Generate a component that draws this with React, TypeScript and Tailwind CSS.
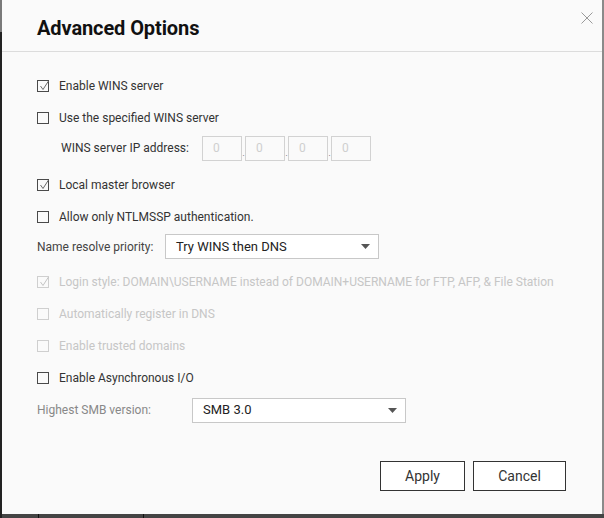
import React from "react";

function CheckBox({ checked, disabled }: { checked?: boolean; disabled?: boolean }) {
  return (
    <span
      className={`relative inline-block w-[12px] h-[12px] border shrink-0 ${
        disabled ? "border-[#cfcfcf]" : "border-[#4a4a4a]"
      }`}
    >
      {checked && (
        <svg
          className="absolute left-[1px] top-[-1px]"
          width="11"
          height="12"
          viewBox="0 0 11 12"
          fill="none"
        >
          <polyline
            points="1.5,6 4,9.5 9.5,1"
            stroke={disabled ? "#c4c4c4" : "#6a6a6a"}
            strokeWidth="1"
          />
        </svg>
      )}
    </span>
  );
}

function CheckRow({
  label,
  checked,
  disabled,
  className = "",
}: {
  label: string;
  checked?: boolean;
  disabled?: boolean;
  className?: string;
}) {
  return (
    <div className={`h-8 flex items-center gap-[10px] ${className}`}>
      <CheckBox checked={checked} disabled={disabled} />
      <span className={`whitespace-nowrap ${disabled ? "text-[#c6c6c6]" : "text-[#333]"}`}>{label}</span>
    </div>
  );
}

function Select({ value, className = "" }: { value: string; className?: string }) {
  return (
    <div
      className={`h-[25px] border border-[#c8c8c8] bg-white flex items-center justify-between pl-[10px] pr-[8px] ${className}`}
    >
      <span className="text-[13px] text-[#222]">{value}</span>
      <svg width="9" height="5" viewBox="0 0 9 5">
        <polygon points="0,0 9,0 4.5,5" fill="#555" />
      </svg>
    </div>
  );
}

function IpBox() {
  return (
    <div className="w-[40px] h-[25px] border border-[#d2d2d2] bg-[#fafafa] flex items-center pl-[10px] text-[#cfcfcf]">
      0
    </div>
  );
}

function IpDot() {
  return <span className="w-[3px] text-[8px] leading-[14px] text-[#555] text-center">.</span>;
}

export default function App() {
  return (
    <div
      className="w-[604px] h-[518px] flex flex-col bg-[#3b3b3b] overflow-hidden text-[12px]"
      style={{ fontFamily: "Roboto, 'Liberation Sans', sans-serif" }}
    >
      <div className="flex h-[514px]">
        {/* left backdrop strip */}
        <div className="w-[2px] flex flex-col">
          <div className="h-[32px] bg-[#7a7a7a]" />
          <div className="flex-1 bg-[#222]" />
        </div>

        {/* dialog */}
        <div className="w-[600px] bg-[#fafafa] flex flex-col relative">
          <div className="h-[52px] border-b border-[#dcdcdc] flex items-center pl-[35px] pt-[4px]">
            <h1 className="text-[20px] font-bold text-[#111] tracking-[-0.1px]">Advanced Options</h1>
          </div>
          <button className="absolute left-[579px] top-[12px] w-[12px] h-[12px]">
            <svg width="12" height="12" viewBox="0 0 12 12">
              <path d="M0.5 0.5 L11.5 11.5 M11.5 0.5 L0.5 11.5" stroke="#9a9a9a" strokeWidth="1" />
            </svg>
          </button>

          <div className="pl-[35px] pt-[18px] flex flex-col">
            <CheckRow label="Enable WINS server" checked />
            <CheckRow label="Use the specified WINS server" />
            <div className="h-[28px] flex items-center">
              <span className="w-[165px] shrink-0 pl-[24px] whitespace-nowrap text-[#333]">
                WINS server IP address:
              </span>
              <div className="flex items-end">
                <IpBox />
                <IpDot />
                <IpBox />
                <IpDot />
                <IpBox />
                <IpDot />
                <IpBox />
              </div>
            </div>
            <CheckRow label="Local master browser" checked className="mt-[7px]" />
            <CheckRow label="Allow only NTLMSSP authentication." />
            <div className="h-[27px] flex items-center">
              <span className="w-[128px] shrink-0 text-[#444]">Name resolve priority:</span>
              <Select value="Try WINS then DNS" className="w-[214px]" />
            </div>
            <CheckRow
              label="Login style: DOMAIN\USERNAME instead of DOMAIN+USERNAME for FTP, AFP, & File Station"
              checked
              disabled
              className="mt-[6px]"
            />
            <CheckRow label="Automatically register in DNS" disabled />
            <CheckRow label="Enable trusted domains" disabled />
            <CheckRow label="Enable Asynchronous I/O" />
            <div className="h-8 flex items-center">
              <span className="w-[155px] shrink-0 text-[#888]">Highest SMB version:</span>
              <Select value="SMB 3.0" className="w-[214px]" />
            </div>
          </div>

          <div className="flex justify-end gap-[8px] pr-[36px] mt-[35px]">
            <button className="w-[85px] h-[30px] border border-[#333] bg-white text-[14px] text-[#333]">
              Apply
            </button>
            <button className="w-[93px] h-[30px] border border-[#333] bg-white text-[14px] text-[#333]">
              Cancel
            </button>
          </div>
        </div>

        {/* right backdrop strip */}
        <div className="w-[2px] bg-[#8a8a8a]" />
      </div>

      {/* bottom backdrop strip */}
      <div className="h-[4px] flex bg-[#444]">
        <div className="w-[2px] bg-[#222]" />
        <div className="w-[36px]" />
        <div className="w-px bg-[#111]" />
        <div className="w-[104px]" />
        <div className="w-px bg-[#111]" />
      </div>
    </div>
  );
}
